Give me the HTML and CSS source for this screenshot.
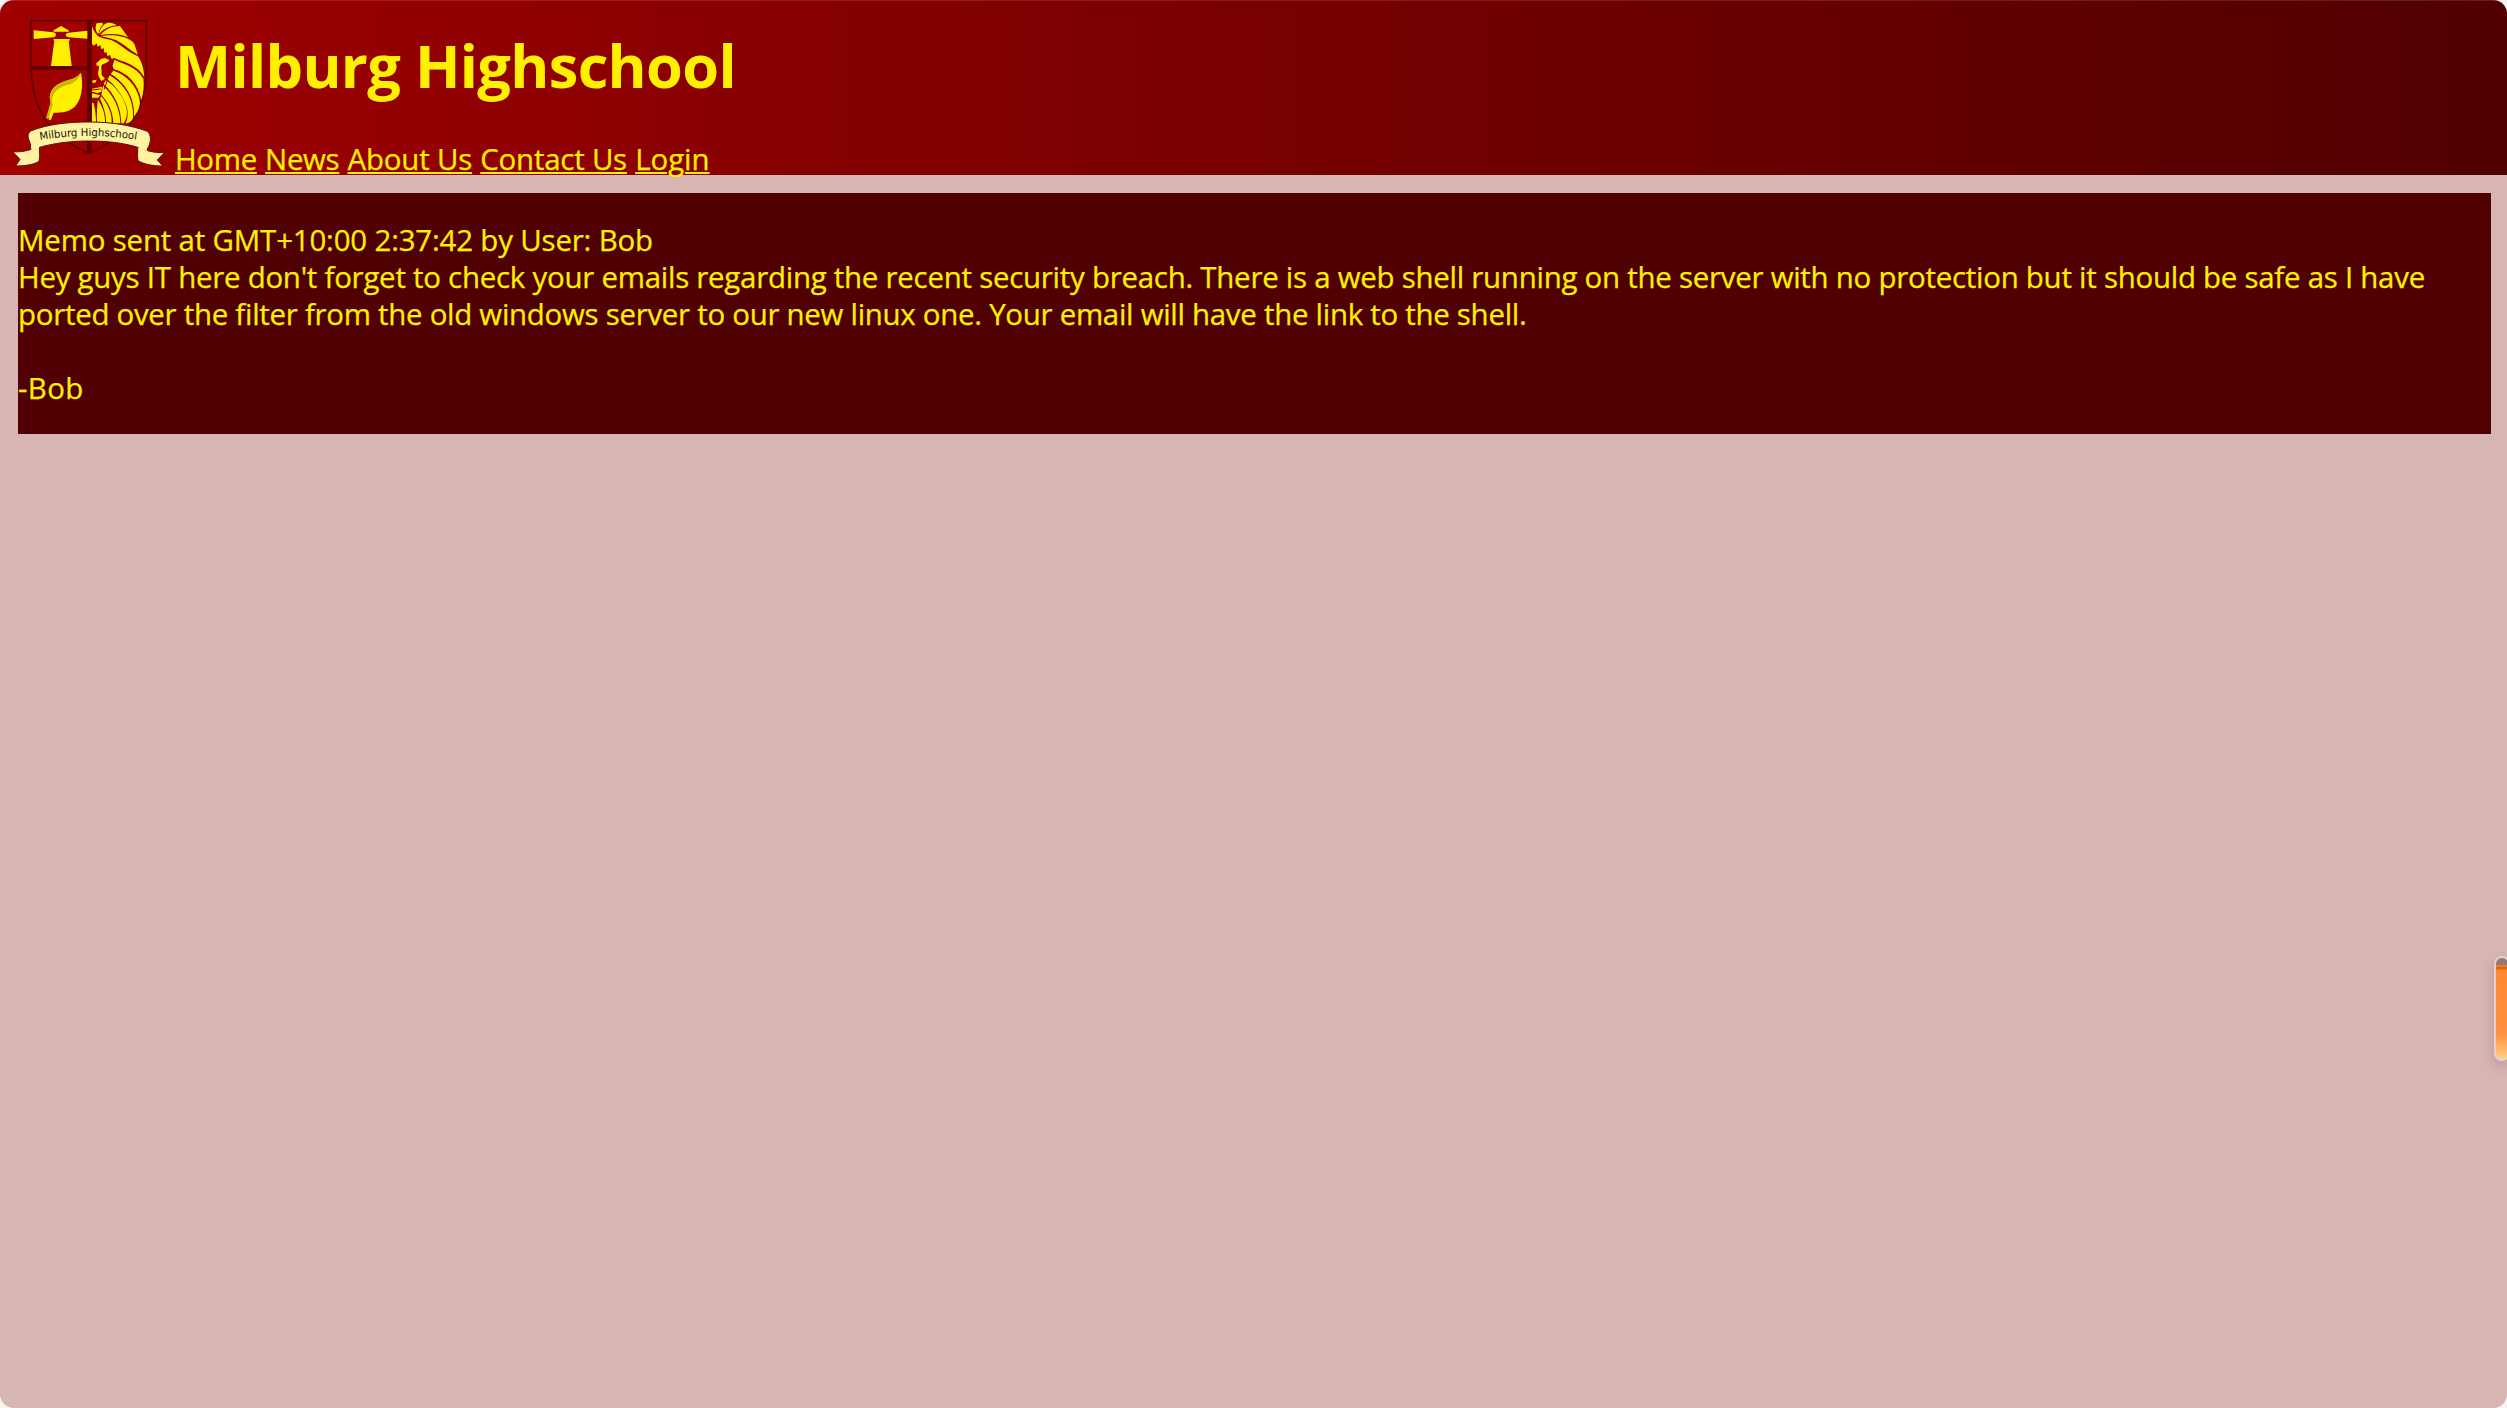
FILE: index.html
```html
<!DOCTYPE html>
<html lang="en">
<head>
<meta charset="utf-8">
<title>Milburg Highschool</title>
<link rel="stylesheet" href="styles.css">
</head>
<body>
<div class="page">
  <header class="header">
    <svg class="crest" viewBox="0 0 525 525" role="img" aria-label="Milburg Highschool crest">
      <path d="M93 62H439V210C436 290 415 350 375 390C345 420 310 440 267 460C220 440 180 415 150 378C112 332 95 275 93 200Z" fill="#a00000" stroke="#600000" stroke-width="5"/>
      <path d="M268 62V458" stroke="#600000" stroke-width="14"/>
      <path d="M93 204H268" stroke="#600000" stroke-width="10"/>
      <g fill="#fff000">
        <path d="M159 92L183 78L208 92L205 95H162Z"/>
        <path d="M101 91L160 97L167 100V109L160 112L101 117Z"/>
        <path d="M262 92L206 98L198 101V109L206 112L262 116Z"/>
        <path d="M161 117H209V122H206L215 198H153L163 122H161Z"/>
        <path d="M243 218C220 246 189 236 163 261C149 276 147 292 152 307L140 355L148 353L146 360L153 359L161 338C190 340 220 333 234 307C247 284 249 249 243 218Z"/>
        <path d="M290 70L306 68L309 73C301 82 296 92 295 103C286 94 285 82 290 70Z"/>
        <path d="M297 102C299 87 308 75 321 69C332 67 342 70 350 76C330 77 312 86 297 102Z"/>
        <path d="M301 105C315 88 337 78 360 78L384 112C360 101 332 100 301 105Z"/>
        <path d="M302 108C340 102 387 108 403 132L414 164C384 148 365 125 340 118C326 113 312 112 302 108Z"/>
        <path d="M276 78C280 92 286 100 293 107C303 115 320 116 335 121C363 134 385 158 413 168C424 182 431 203 433 232C412 194 376 188 343 174L335 177L330 165L322 168L320 157L313 158L311 144L304 148L301 135L293 140L290 130L281 137L276 131Z"/>
        <path d="M343 179C371 193 408 198 430 236C433 255 430 281 424 300C414 251 382 218 342 208L337 197Z"/>
        <path d="M340 212C383 225 416 264 420 308C418 327 410 340 402 350C406 294 374 246 332 222Z"/>
        <path d="M329 226C372 251 403 297 399 354C396 364 385 370 377 370C386 350 384 326 377 311C363 280 342 251 320 237Z"/>
        <path d="M317 241C345 257 368 288 376 313C386 338 379 359 371 370H364C363 326 347 285 311 252Z"/>
        <path d="M309 257C341 285 360 326 361 370H340C339 337 327 309 304 284Z"/>
        <path d="M304 289C324 313 337 340 335 370H319C318 342 311 319 300 296Z"/>
        <path d="M294 300C309 322 316 345 315 370H291C290 341 291 319 294 300Z"/>
        <path d="M276 308L281 310C286 330 288 350 288 370H276Z"/>
        <path d="M289 190L303 177L315 174L329 181L320 188C314 191 307 191 304 197L305 225L315 236L304 243L296 229C291 216 300 206 296 197H290Z"/>
        <path d="M276 242L290 239L286 248H278ZM276 266L306 260L304 275L293 279L276 275ZM276 280L301 286L295 293H276Z"/>
      </g>
      <path d="M243 218C220 246 189 236 163 261C149 276 147 292 152 307L138 355L145 357L158 315C149 284 170 267 193 258C220 250 237 240 243 218Z" fill="#c8b800"/>
      <path d="M276 270L302 267M341 181L313 268" fill="none" stroke="#900000" stroke-width="3"/>
      <g fill="#fff2a0" stroke="#60100c" stroke-width="3" stroke-linejoin="round">
        <path d="M118 438C98 448 70 458 38 455L60 478L47 498C75 498 102 494 117 484C121 470 118 455 118 438Z"/>
        <path d="M414 440C435 451 462 460 494 457L472 480L488 498C458 498 430 492 414 482C411 466 413 453 414 440Z"/>
        <path d="M90 394C142 372 205 366 267 366C332 366 392 375 442 394C455 405 454 428 442 447L417 443C369 428 319 423 267 423C214 423 163 429 115 443L92 445C96 427 74 413 90 394Z"/>
      </g>
      <path d="M93 436L117 440V447L94 451ZM415 442L440 439L441 453L415 448Z" fill="#fff2a0"/>
      <path id="ribbon" d="M120 420Q267 396 414 420" fill="none"/>
      <text class="ribbon-text"><textPath href="#ribbon" textLength="291" lengthAdjust="spacingAndGlyphs">Milburg Highschool</textPath></text>
    </svg>
    <div class="masthead">
      <h1 class="title">Milburg Highschool</h1>
      <nav class="nav">
        <a class="home" href="#">Home</a>
        <a class="news" href="#">News</a>
        <a class="about" href="#">About Us</a>
        <a class="contact" href="#">Contact Us</a>
        <a class="login" href="#">Login</a>
      </nav>
    </div>
  </header>
  <main class="memo">
    <div class="line sent">Memo sent at GMT+10:00 2:37:42 by User: Bob</div>
    <div class="line first">Hey guys IT here don't forget to check your emails regarding the recent security breach. There is a web shell running on the server with no protection but it should be safe as I have</div>
    <div class="line second">ported over the filter from the old windows server to our new linux one. Your email will have the link to the shell.</div>
    <div class="line signature">-Bob</div>
  </main>
  <div class="handle"></div>
</div>
</body>
</html>
```
FILE: styles.css
```css
html { background: #f4f4f4; }
body { margin: 0; font-family: "Open Sans", "Noto Sans", sans-serif; font-size: 29.4px; color: #fff000; }
.page { position: relative; height: 1408px; box-sizing: border-box; overflow: hidden; border-radius: 14px; background: #d7b5b3; }
.header { display: flex; height: 175px; background: linear-gradient(to right, #a00000, #500000); box-shadow: inset 0 1px #ffffff20; }
.crest { width: 175px; height: 175px; flex: none; }
.ribbon-text { font-family: "DejaVu Sans", sans-serif; font-size: 32px; fill: #201808; }
.masthead { display: flex; flex-direction: column; }
.title { flex: none; margin: 23px 0 0; height: 118px; font-size: 59.5px; line-height: 84px; font-weight: 700; letter-spacing: -0.66px; white-space: nowrap; }
.nav { display: flex; flex: none; gap: 8.2px; line-height: 37px; white-space: nowrap; }
.nav a { color: inherit; text-decoration: underline; text-decoration-thickness: 2px; text-underline-offset: 2px; text-decoration-skip-ink: auto; -webkit-text-stroke: 0.25px #fff000; }
.home { letter-spacing: -0.3px; }
.news { letter-spacing: -0.3px; }
.about { letter-spacing: -0.15px; }
.contact { letter-spacing: -0.2px; }
.memo { box-sizing: border-box; height: 241px; margin: 18px 16px 0 18px; padding-top: 29px; background: #500000; }
.line { line-height: 37px; white-space: nowrap; -webkit-text-stroke: 0.25px #fff000; }
.sent { letter-spacing: -0.15px; }
.first { letter-spacing: -0.232px; }
.second { letter-spacing: -0.255px; }
.signature { margin-top: 37px; letter-spacing: 0.4px; }
.handle { position: absolute; left: 2494px; top: 956px; width: 16px; height: 105px; box-sizing: border-box; border: 2px solid #e5d0d0; border-radius: 8px; background: linear-gradient(#8f777b 0 7px, #f47c20 7px 9px, #dc6814 9px 11px, #ff8833 12px, #ff9140 75%, #ffd080); box-shadow: 0 5px 12px #80506050; }
```
